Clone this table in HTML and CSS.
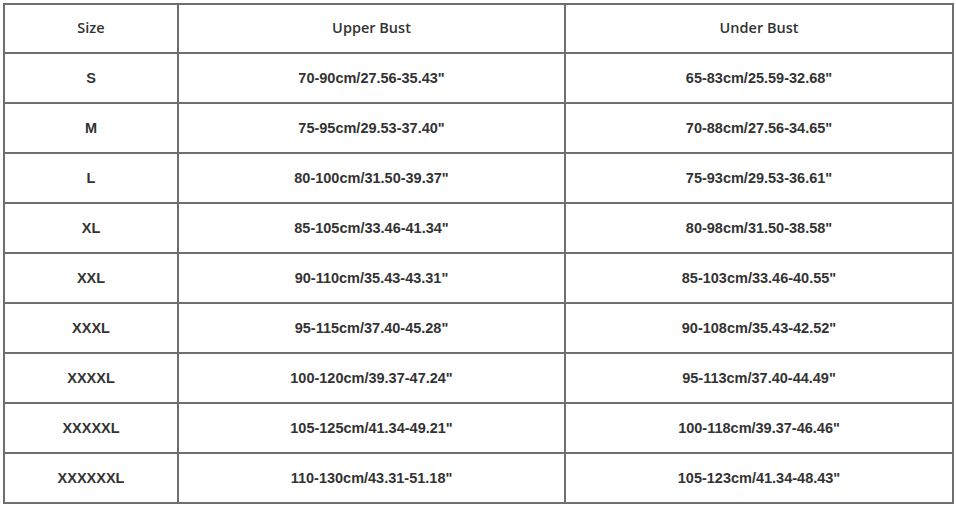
FILE: index.html
```html
<!DOCTYPE html>
<html>
<head>
<meta charset="utf-8">
<link rel="stylesheet" href="styles.css">
</head>
<body>
<table class="chart">
  <colgroup><col class="c1"><col class="c2"><col class="c3"></colgroup>
  <thead>
    <tr><th>Size</th><th>Upper Bust</th><th>Under Bust</th></tr>
  </thead>
  <tbody>
    <tr><td class="sz">S</td><td>70-90cm/27.56-35.43"</td><td>65-83cm/25.59-32.68"</td></tr>
    <tr><td class="sz">M</td><td>75-95cm/29.53-37.40"</td><td>70-88cm/27.56-34.65"</td></tr>
    <tr><td class="sz">L</td><td>80-100cm/31.50-39.37"</td><td>75-93cm/29.53-36.61"</td></tr>
    <tr><td class="sz">XL</td><td>85-105cm/33.46-41.34"</td><td>80-98cm/31.50-38.58"</td></tr>
    <tr><td class="sz">XXL</td><td>90-110cm/35.43-43.31"</td><td>85-103cm/33.46-40.55"</td></tr>
    <tr><td class="sz">XXXL</td><td>95-115cm/37.40-45.28"</td><td>90-108cm/35.43-42.52"</td></tr>
    <tr><td class="sz">XXXXL</td><td>100-120cm/39.37-47.24"</td><td>95-113cm/37.40-44.49"</td></tr>
    <tr><td class="sz">XXXXXL</td><td>105-125cm/41.34-49.21"</td><td>100-118cm/39.37-46.46"</td></tr>
    <tr><td class="sz">XXXXXXL</td><td>110-130cm/43.31-51.18"</td><td>105-123cm/41.34-48.43"</td></tr>
  </tbody>
</table>
</body>
</html>
```
FILE: styles.css
```css
html, body {
  margin: 0;
  padding: 0;
  background: #ffffff;
}
body {
  padding: 3px 0 0 3px;
}
.chart {
  border-collapse: collapse;
  table-layout: fixed;
  width: 949px;
  color: #333333;
}
.c1 { width: 174px; }
.c2 { width: 387px; }
.c3 { width: 388px; }
.chart th,
.chart td {
  border: 2px solid #6e6e6e;
  text-align: center;
  vertical-align: middle;
  padding: 0;
}
.chart th {
  height: 44px;
  padding-bottom: 3px;
  font-family: "Open Sans", "Noto Sans", sans-serif;
  font-weight: 600;
  font-size: 14.5px;
}
.chart td {
  height: 48px;
  font-family: "Liberation Sans", Arial, sans-serif;
  font-weight: bold;
  font-size: 14.5px;
}
.chart td.sz {
  font-weight: 600;
}
```
